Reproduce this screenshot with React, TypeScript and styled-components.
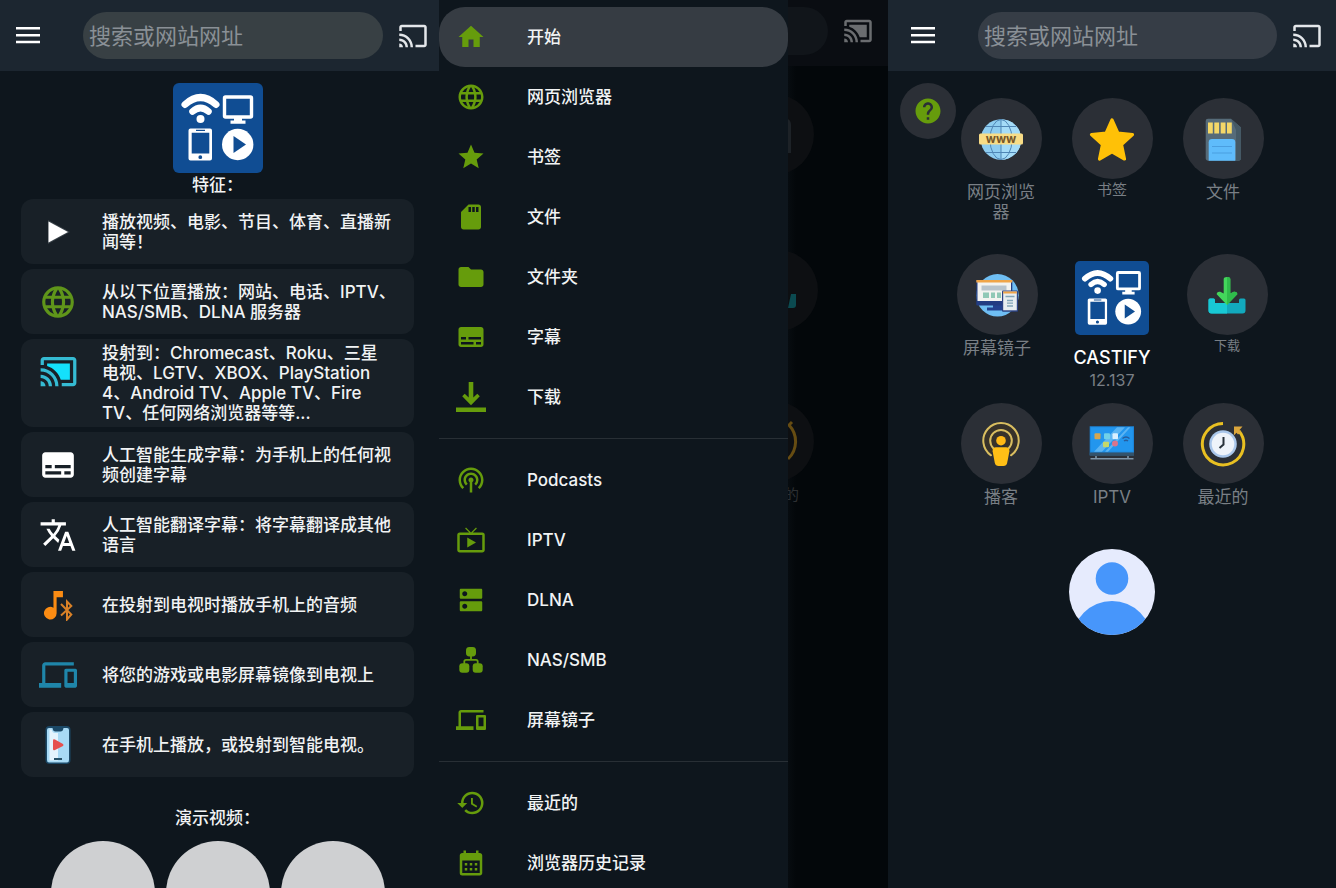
import React from "react";
import styled, { createGlobalStyle } from "styled-components";
import {
  MdCalendarMonth,
  MdCast,
  MdCastConnected,
  MdDevices,
  MdDns,
  MdFolder,
  MdHelp,
  MdHistory,
  MdHome,
  MdLanguage,
  MdLiveTv,
  MdPodcasts,
  MdSdStorage,
  MdStar,
  MdSubtitles,
  MdTranslate,
} from "react-icons/md";

const color = {
  page: "#0e161d",
  bar: "#1c2630",
  card: "#182027",
  disc: "#2b2f36",
  text: "#f1f3f4",
  muted: "#797f85",
  green: "#669c0c",
};

const GlobalStyle = createGlobalStyle`
  *, *::before, *::after { box-sizing: border-box; }
  body {
    margin: 0;
    background: ${color.page};
    color: ${color.text};
    font-family: Inter, "Noto Sans CJK SC", sans-serif;
    font-size: 17px;
    line-height: 20px;
  }
  ul { margin: 0; padding: 0; list-style: none; }
  h2, p { margin: 0; }
  svg { display: block; flex: none; }
`;

/* ---------- shared ---------- */

const Page = styled.main`
  display: grid;
  grid-template-columns: 439fr 449fr 448fr;
  height: 100vh;
  overflow: hidden;
`;

const Screen = styled.section`
  position: relative;
  min-width: 0;
  background: ${color.page};
`;

const TopBar = styled.header<{ $inset: number; $end: number }>`
  display: flex;
  align-items: center;
  height: 71px;
  padding: 0 ${(p) => p.$end}px 0 ${(p) => p.$inset}px;
  background: ${color.bar};
`;

const IconButton = styled.button`
  display: flex;
  padding: 0;
  border: 0;
  background: none;
  color: #e4e7ea;
`;

const SearchBox = styled.input<{ $fill: string }>`
  flex: 1;
  min-width: 0;
  height: 47px;
  margin: 0 15px 0 43px;
  padding: 0 6px;
  border: 0;
  border-radius: 24px;
  background: ${(p) => p.$fill};
  color: ${color.text};
  font: 22px/28px Inter, "Noto Sans CJK SC", sans-serif;
  &::placeholder { color: #8a9096; opacity: 1; }
`;

const MenuGlyph = () => (
  <svg width="24" height="18" viewBox="0 0 24 18" stroke="#fff" strokeWidth="2.6">
    <path d="M0 1.300h24M0 8.200h24M0 15h24" />
  </svg>
);

function SearchBar({ inset, end, fill, id }: { inset: number; end: number; fill: string; id: string }) {
  return (
    <TopBar $inset={inset} $end={end}>
      <IconButton aria-label="菜单"><MenuGlyph /></IconButton>
      <SearchBox id={id} $fill={fill} type="text" placeholder="搜索或网站网址" aria-label="搜索或网站网址" />
      <IconButton aria-label="投射"><MdCast size={30} /></IconButton>
    </TopBar>
  );
}

const CastifyLogo = ({ size }: { size: number }) => (
  <svg width={size} height={size} viewBox="0 0 90 90" role="img" aria-label="Castify">
    <rect width="90" height="90" rx="6" fill="#104d93" />
    <g fill="none" stroke="#fff" strokeLinecap="round">
      <path d="M12 21.5Q27.5 7.500 43 21.500" strokeWidth="7" />
      <path d="M19.500 28.500Q27.500 21.500 35.500 28.500" strokeWidth="6.500" />
    </g>
    <circle cx="27.500" cy="36" r="4" fill="#fff" />
    <rect x="51.500" y="14" width="27" height="20" rx="1" fill="none" stroke="#fff" strokeWidth="3.400" />
    <path d="M61 35h8v2.500h3.500v3.200h-15v-3.200H61z" fill="#fff" />
    <path d="M17.500 45.500h19.500a2 2 0 012 2v28a2 2 0 01-2 2H17.500a2 2 0 01-2-2v-28a2 2 0 012-2zm1.200 4.200V70.500h17.600V49.700zM23 46.800v1.200h9v-1.200zM27.300 72.300a1.900 1.900 0 100 3.800 1.900 1.900 0 000-3.800z" fill="#fff" fillRule="evenodd" />
    <circle cx="64.700" cy="61.500" r="15.700" fill="#fff" />
    <path d="M60.500 53v17l12.500-8.500z" fill="#104d93" />
  </svg>
);

/* ---------- feature list ---------- */

const Intro = styled.div`
  display: flex;
  flex-direction: column;
  align-items: center;
  padding: 12px 25px 0 21px;
`;

const Heading = styled.h2`
  padding: 2px 0 4px;
  font-size: 17px;
  line-height: 20px;
  font-weight: 500;
`;

const FeatureList = styled.ul`
  display: flex;
  flex-direction: column;
  gap: 5px;
  width: 100%;
  margin-bottom: 29px;
`;

const Feature = styled.li`
  display: flex;
  min-height: 65px;
  padding: 0 13px 0 17px;
  border-radius: 12px;
  background: ${color.card};
`;

const FeatureIcon = styled.span<{ $tint: string }>`
  display: flex;
  align-items: center;
  justify-content: center;
  width: 40px;
  height: 65px;
  margin-right: 24px;
  color: ${(p) => p.$tint};
`;

const FeatureText = styled.p`
  flex: 1;
  align-self: center;
  padding: 4px 0;
  font-weight: 500;
  white-space: pre-line;
`;

const Demos = styled.div`
  display: flex;
  gap: 11px;
  margin-top: 9px;
`;

const DemoButton = styled.button`
  width: 104px;
  height: 104px;
  border: 0;
  border-radius: 50%;
  background: #cfd0d2;
`;

const PlayGlyph = () => (
  <svg width="30" height="30" viewBox="0 0 30 30">
    <path d="M5 3v24l22-12z" fill="#58626a" opacity=".5" />
    <path d="M5.500 4.500v21L25 15z" fill="#fff" />
  </svg>
);

const CastOnGlyph = () => (
  <svg width="39" height="39" viewBox="0 0 24 24">
    <path d="M19 7H5v1.630c3.960 1.280 7.090 4.410 8.370 8.370H19z" fill="#14e0fb" />
    <path d="M1 18v3h3c0-1.660-1.340-3-3-3zm0-4v2c2.760 0 5 2.240 5 5h2c0-3.870-3.130-7-7-7zm0-4v2a9 9 0 019 9h2c0-6.080-4.930-11-11-11zM21 3H3c-1.100 0-2 .9-2 2v3h2V5h18v14h-7v2h7c1.100 0 2-.9 2-2V5c0-1.100-.9-2-2-2z" fill="#35bbd3" />
  </svg>
);

const BluetoothAudioGlyph = () => (
  <svg width="32" height="32" viewBox="0 0 32 32">
    <path d="M12 3v10.550A4 4 0 1014 17V7h4V3z" transform="translate(-7.500 -2.700) scale(1.580)" fill="#fb8c13" />
    <path d="M19 15l10.300 10.500-4.300 5V12.500l4.300 4.500L19 26.500" fill="none" stroke="#d98127" strokeWidth="2" />
  </svg>
);

const PhonePlayGlyph = () => (
  <svg width="28" height="40" viewBox="0 0 28 40">
    <rect x="1.500" y="1" width="25" height="38" rx="4" fill="#1b4866" />
    <path d="M5 3h3.500q.5 3.500 3 3.500h5q2.500 0 3-3.500H23q2 0 2 2v30q0 2.500-2 2.500H5q-2 0-2-2.500V5q0-2 2-2z" fill="#a8daf5" />
    <path d="M5.500 4.500h2q1 3.500 3.500 3.500h3v27.500H5.500z" fill="#e4f4fd" />
    <path d="M9 15.500q0-2 2-1l8 4.500q1 1 0 2l-8 4q-2 1-2-1z" fill="#e5504e" />
    <path d="M10 34h8" stroke="#285268" strokeWidth="2" />
  </svg>
);

const features: { text: string; tint: string; icon: React.ReactNode }[] = [
  { text: "播放视频、电影、节目、体育、直播新\n闻等！", tint: "#fff", icon: <PlayGlyph /> },
  { text: "从以下位置播放：网站、电话、IPTV、\nNAS/SMB、DLNA 服务器", tint: "#5f951a", icon: <MdLanguage size={38} /> },
  {
    text: "投射到：Chromecast、Roku、三星\n电视、LGTV、XBOX、PlayStation\n4、Android TV、Apple TV、Fire\nTV、任何网络浏览器等等...",
    tint: "#35bbd3",
    icon: <CastOnGlyph />,
  },
  { text: "人工智能生成字幕：为手机上的任何视\n频创建字幕", tint: "#fff", icon: <MdSubtitles size={38} /> },
  { text: "人工智能翻译字幕：将字幕翻译成其他\n语言", tint: "#fff", icon: <MdTranslate size={38} /> },
  { text: "在投射到电视时播放手机上的音频", tint: "#fb8c13", icon: <BluetoothAudioGlyph /> },
  { text: "将您的游戏或电影屏幕镜像到电视上", tint: "#1f86aa", icon: <MdDevices size={38} /> },
  { text: "在手机上播放，或投射到智能电视。", tint: "#fff", icon: <PhonePlayGlyph /> },
];

function FeatureScreen() {
  return (
    <Screen>
      <SearchBar id="search-features" inset={16} end={11} fill="#384044" />
      <Intro>
        <CastifyLogo size={90} />
        <Heading>特征：</Heading>
        <FeatureList>
          {features.map((f) => (
            <Feature key={f.text}>
              <FeatureIcon $tint={f.tint}>{f.icon}</FeatureIcon>
              <FeatureText>{f.text}</FeatureText>
            </Feature>
          ))}
        </FeatureList>
        <Heading>演示视频：</Heading>
        <Demos>
          {[1, 2, 3].map((n) => (
            <DemoButton key={n} aria-label={`演示 ${n}`} />
          ))}
        </Demos>
      </Intro>
    </Screen>
  );
}

/* ---------- drawer ---------- */

const DrawerScreen = styled(Screen)`
  display: grid;
  grid-template-columns: 349fr 100fr;
`;

const Drawer = styled.nav`
  padding-top: 7px;
  background: ${color.page};
`;

const DrawerGroup = styled.ul`
  & + & {
    margin-top: 11px;
    padding-top: 11px;
    border-top: 1px solid #282f35;
  }
`;

const DrawerLink = styled.a<{ $active?: boolean }>`
  display: flex;
  align-items: center;
  gap: 41px;
  height: 60px;
  padding-left: 17px;
  border-radius: 26px;
  background: ${(p) => (p.$active ? "#363c43" : "transparent")};
  color: ${color.text};
  font-weight: 500;
  text-decoration: none;
  svg { color: ${color.green}; }
`;

const DownloadGlyph = () => (
  <svg width="30" height="30" viewBox="0 0 30 30" fill="currentColor">
    <path d="M12.700 0h4.600v15.500l4-3.800 2.500 2.600L15 23.300l-8.800-9 2.500-2.600 4 3.800zM0 25.600h30V30H0z" />
  </svg>
);

const NetworkGlyph = () => (
  <svg width="30" height="30" viewBox="0 0 30 30" fill="currentColor">
    <rect x="10" y="2" width="10" height="9.500" rx="3.400" />
    <rect x="3.300" y="18.300" width="10" height="9.500" rx="3" />
    <rect x="16.700" y="18.300" width="10" height="9.500" rx="3" />
    <path d="M15 11v4M8.300 19v-2.500q0-1.700 1.700-1.700h10q1.700 0 1.700 1.700V19" fill="none" stroke="currentColor" strokeWidth="1.800" />
  </svg>
);

type MenuEntry = { label: string; icon: React.ReactNode; active?: boolean };

const menu: MenuEntry[][] = [
  [
    { label: "开始", icon: <MdHome size={30} />, active: true },
    { label: "网页浏览器", icon: <MdLanguage size={30} /> },
    { label: "书签", icon: <MdStar size={30} /> },
    { label: "文件", icon: <MdSdStorage size={30} /> },
    { label: "文件夹", icon: <MdFolder size={30} /> },
    { label: "字幕", icon: <MdSubtitles size={30} /> },
    { label: "下载", icon: <DownloadGlyph /> },
  ],
  [
    { label: "Podcasts", icon: <MdPodcasts size={30} /> },
    { label: "IPTV", icon: <MdLiveTv size={30} /> },
    { label: "DLNA", icon: <MdDns size={30} /> },
    { label: "NAS/SMB", icon: <NetworkGlyph /> },
    { label: "屏幕镜子", icon: <MdDevices size={30} /> },
  ],
  [
    { label: "最近的", icon: <MdHistory size={30} /> },
    { label: "浏览器历史记录", icon: <MdCalendarMonth size={30} /> },
  ],
];

/* The dimmed home screen showing beside the open drawer. */

const Backdrop = styled.div`
  overflow: hidden;
  background: linear-gradient(to right, #070c10, #03070a 8px);
`;

const BackdropBar = styled.div`
  display: flex;
  align-items: center;
  justify-content: space-between;
  height: 66px;
  padding: 0 15px 4px 0;
  background: #0a0d12;
  color: #6b6d70;
`;

const BackdropField = styled.div`
  width: 40px;
  height: 48px;
  border-radius: 0 24px 24px 0;
  background: #11151a;
`;

const BackdropTile = styled.div<{ $gap: number; $shift: number }>`
  width: 81px;
  height: 81px;
  margin: ${(p) => p.$gap}px 0 0 ${(p) => p.$shift}px;
  border-radius: 50%;
  background: #0d0f12;
`;

const BackdropLabel = styled.p`
  margin-top: 3px;
  font-size: 15px;
  margin-left: -4px;
  color: #2c2f32;
`;

function MenuScreen() {
  return (
    <DrawerScreen>
      <Drawer aria-label="主菜单">
        {menu.map((group, i) => (
          <DrawerGroup key={i}>
            {group.map((m) => (
              <li key={m.label}>
                <DrawerLink href="#" $active={m.active}>
                  {m.icon}
                  {m.label}
                </DrawerLink>
              </li>
            ))}
          </DrawerGroup>
        ))}
      </Drawer>
      <Backdrop>
        <BackdropBar>
          <BackdropField />
          <MdCastConnected size={30} />
        </BackdropBar>
        <BackdropTile $gap={28} $shift={-55}>
          <svg width="81" height="81" viewBox="0 0 81 81"><path d="M53 24q5 2 5 7v28h-5z" fill="#1d2227" /></svg>
        </BackdropTile>
        <BackdropTile $gap={75} $shift={-51}>
          <svg width="81" height="81" viewBox="0 0 81 81"><path d="M54 44h5v11q0 3-3 3h-5z" fill="#0b4a50" /></svg>
        </BackdropTile>
        <BackdropTile $gap={70} $shift={-55}>
          <svg width="81" height="81" viewBox="0 0 81 81"><path d="M59 21l-3 3a24 24 0 01-1 34" fill="none" stroke="#664c12" strokeWidth="3" /></svg>
        </BackdropTile>
        <BackdropLabel>的</BackdropLabel>
      </Backdrop>
    </DrawerScreen>
  );
}

/* ---------- home ---------- */

const HelpButton = styled.button`
  position: absolute;
  top: 83px;
  left: 12px;
  display: flex;
  align-items: center;
  justify-content: center;
  width: 56px;
  height: 56px;
  padding: 0;
  border: 0;
  border-radius: 50%;
  background: ${color.disc};
  color: ${color.green};
`;

const Tiles = styled.div`
  display: flex;
  flex-direction: column;
  align-items: center;
  padding-top: 27px;
`;

const TileRow = styled.ul<{ $gap: number; $after: number }>`
  display: flex;
  gap: ${(p) => p.$gap}px;
  margin-bottom: ${(p) => p.$after}px;
`;

const TileLink = styled.a`
  display: flex;
  flex-direction: column;
  align-items: center;
  gap: 3px;
  width: 81px;
  color: ${color.muted};
  text-align: center;
  text-decoration: none;
`;

const Disc = styled.span`
  display: flex;
  align-items: center;
  justify-content: center;
  width: 81px;
  height: 81px;
  border-radius: 50%;
  background: ${color.disc};
`;

const TileLabel = styled.span<{ $size: number }>`
  padding: 0 5px;
  font-size: ${(p) => p.$size}px;
  line-height: ${(p) => (p.$size < 17 ? p.$size + 1 : 20)}px;
`;

const Brand = styled.li`
  display: flex;
  flex-direction: column;
  align-items: center;
  width: 81px;
  padding-top: 7px;
`;

const BrandName = styled.p`
  margin: 13px 0 2px;
  color: #fff;
  font-size: 18px;
  font-weight: 500;
`;

const Version = styled.p`
  color: ${color.muted};
  font-size: 16px;
`;

const AvatarButton = styled.button`
  padding: 0;
  border: 0;
  border-radius: 50%;
  background: none;
`;

const BandText = styled.text`
  font: 700 12px Inter, sans-serif;
  fill: #75572a;
  text-anchor: middle;
`;

const Art = ({ children }: { children: React.ReactNode }) => (
  <svg width="46" height="46" viewBox="0 0 46 46">{children}</svg>
);

const WebArt = () => (
  <Art>
    <circle cx="23" cy="23.500" r="20.300" fill="#8fcdf0" />
    <path d="M23 3.200a20.300 20.300 0 010 40.600z" fill="#a5dcf8" />
    <g fill="none" stroke="#4f86b5" strokeWidth="1">
      <ellipse cx="23" cy="23.500" rx="11" ry="20" />
      <path d="M23 3v41M8 10.500h30M8 36.500h30" />
    </g>
    <rect x="1" y="17.500" width="44" height="11" rx="1.500" fill="#f8dc86" />
    <BandText x="23" y="26.500">www</BandText>
  </Art>
);

const StarArt = () => (
  <Art>
    <path d="M23 4l5.800 13L43.500 18.500 32.500 28.500 35.500 43 23 35.800 10.500 43 13.500 28.500 2.500 18.500 17.200 17z" fill="#ffc107" stroke="#ffc107" strokeWidth="3.200" strokeLinejoin="round" />
  </Art>
);

const SdArt = () => (
  <Art>
    <path d="M8 2.700h23L41 11.500V42q0 2.700-2.700 2.700H8.400q-2.700 0-2.700-2.700V5q0-2.300 2.300-2.300z" fill="#566b79" />
    <path d="M31 2.700l10 8.800V42q0 2.700-2.700 2.700H36V14z" fill="#455965" />
    <path d="M8 6.500h4.800v11H8zM14.300 6.500h4.800v11h-4.800zM20.700 6.500h4.800v11h-4.800zM27 6.500h4.800v11H27z" fill="#f3d768" />
    <path d="M12 23h20q3.300 0 3.300 3.300v18.400H8.700V26.300Q8.700 23 12 23z" fill="#5fbcfb" />
    <path d="M12 30.500h20M12 37h20" stroke="#4a9fe0" strokeWidth="1" />
  </Art>
);

const MirrorArt = () => (
  <Art>
    <circle cx="23.500" cy="23.300" r="21.200" fill="#6fbef3" />
    <path d="M13 38.500v-3h6V32h10v3.500h4v3z" fill="#23428f" />
    <rect x="2.300" y="8" width="36" height="25.500" rx="1" fill="#223c82" />
    <rect x="3.500" y="9" width="33.500" height="20" fill="#f3f3f0" />
    <path d="M2.300 8h36v2.600h-36z" fill="#f0a548" />
    <path d="M7.500 13.500h25v5h-25z" fill="#b8c4cc" />
    <path d="M9 20.500h6v5.500H9zM17 20.500h4v5.500h-4zM23 20.500h4v5.500h-4z" fill="#90c8b6" />
    <rect x="28" y="18.500" width="16" height="21.200" rx="1" fill="#2c4383" />
    <rect x="29.200" y="19.500" width="13.600" height="18.800" fill="#e8eef0" />
    <path d="M29.200 19.500h13.600v2H29.200z" fill="#f0a548" />
    <path d="M31.500 24.500h9M33 28.500h6M33 31.200h6M33 34h6" stroke="#82a6b8" strokeWidth="1.300" />
  </Art>
);

const DownloadArt = () => (
  <Art>
    <path d="M4.500 28q0-1.500 1.500-1.500h3.500q1.500 0 1.500 1.500v3h24v-3q0-1.500 1.500-1.500H40q1.500 0 1.500 1.500v10.500q0 3-3 3h-31q-3 0-3-3z" fill="#12a9bd" />
    <path d="M4.500 28q0-1.500 1.500-1.500h3.500q1.500 0 1.500 1.500v3h12v10.500H7.500q-3 0-3-3z" fill="#18c9d4" />
    <path d="M19.700 7q0-2 3.300-2t3.300 2v14.500l3.500-1.800q3.500-.5 3.500 2.500L23 33 12.700 22.200q0-3 3.500-2.500l3.500 1.800z" fill="#43d65b" />
    <path d="M23 5q3.300 0 3.300 2v14.500l3.500-1.800q3.500-.5 3.500 2.500L23 33z" fill="#2fbb4b" />
  </Art>
);

const PodcastArt = () => (
  <Art>
    <circle cx="23" cy="19.700" r="17" fill="#37322a" />
    <path d="M12 34l11-14 11 14v8H12z" fill={color.disc} />
    <g fill="none" stroke="#d9be60" strokeWidth="2" strokeLinecap="round">
      <path d="M13 34.300A17.700 17.700 0 1133 34.300" />
      <path d="M15.500 27.500a10.800 10.800 0 1115 0" />
    </g>
    <circle cx="23" cy="19.700" r="4.800" fill="#ffb915" />
    <path d="M18 26.200h10q3.600 0 3.400 4l-2.200 11.500q-.7 3.300-3.800 3.300h-4.800q-3.100 0-3.800-3.300l-2.200-11.500q-.2-4 3.400-4z" fill="#ffbf16" />
  </Art>
);

const TvArt = () => (
  <Art>
    <path d="M.7 5.300H45v29H.7z" fill="#1c84d8" />
    <path d="M1.800 6.300h42.100v24.500H1.800z" fill="#2296ee" />
    <path d="M28 6.300h8L13 30.800H5zM39 6.300h2.500L19 30.800h-3z" fill="#6fbdf4" opacity=".75" />
    <path d="M.7 31.500H45v3.200H.7z" fill="#34536b" />
    <path d="M1.500 37.800h43M7 35v3M39 35v3" stroke="#8096a8" strokeWidth="1.600" />
    <rect x="5.500" y="12.300" width="6" height="6" rx="1" fill="#d5a650" />
    <rect x="15" y="12.300" width="6" height="6" rx="1" fill="#6fd0e8" />
    <rect x="23.500" y="12.300" width="5.500" height="6" rx="1" fill="#d9efff" />
    <rect x="14" y="20.800" width="6" height="5.500" rx="1" fill="#c4d86a" />
    <circle cx="26" cy="22.500" r="3" fill="#d9748c" />
    <path d="M33.500 17.500q3.500-3 7 0M35 20q2-1.700 4 0" fill="none" stroke="#285d9c" strokeWidth="1.400" />
  </Art>
);

const RecentArt = () => (
  <Art>
    <path d="M23 2.500A20.700 20.700 0 1039 10" fill="none" stroke="#e9c022" strokeWidth="3" />
    <path d="M34 5.500h8.500L39.500 9l1.500 2-3 2.500-1.500-1.700-2.500 2.400z" fill="#dba63c" />
    <circle cx="23" cy="23" r="13.800" fill="#a9c6ea" />
    <circle cx="23" cy="23" r="11.300" fill="#eef3fa" />
    <path d="M23.500 16v7.500L19.500 27" fill="none" stroke="#28313a" strokeWidth="2" />
  </Art>
);

type Tile = { label: string; art: React.ReactNode; size?: number };

const topTiles: Tile[] = [
  { label: "网页浏览器", art: <WebArt /> },
  { label: "书签", art: <StarArt />, size: 15 },
  { label: "文件", art: <SdArt /> },
];
const bottomTiles: Tile[] = [
  { label: "播客", art: <PodcastArt /> },
  { label: "IPTV", art: <TvArt /> },
  { label: "最近的", art: <RecentArt /> },
];

const TileItem = ({ label, art, size = 17 }: Tile) => (
  <li>
    <TileLink href="#">
      <Disc>{art}</Disc>
      <TileLabel $size={size}>{label}</TileLabel>
    </TileLink>
  </li>
);

function HomeScreen() {
  return (
    <Screen>
      <SearchBar id="search-home" inset={23} end={14} fill="#363d46" />
      <HelpButton aria-label="帮助"><MdHelp size={30} /></HelpButton>
      <Tiles>
        <TileRow $gap={30} $after={32}>
          {topTiles.map((t) => <TileItem key={t.label} {...t} />)}
        </TileRow>
        <TileRow $gap={34} $after={13}>
          <TileItem label="屏幕镜子" art={<MirrorArt />} />
          <Brand>
            <CastifyLogo size={74} />
            <BrandName>CASTIFY</BrandName>
            <Version>12.137</Version>
          </Brand>
          <TileItem label="下载" art={<DownloadArt />} size={13} />
        </TileRow>
        <TileRow $gap={30} $after={42}>
          {bottomTiles.map((t) => <TileItem key={t.label} {...t} />)}
        </TileRow>
        <AvatarButton aria-label="账户">
          <svg width="86" height="86" viewBox="0 0 86 86">
            <clipPath id="avatar-clip"><circle cx="43" cy="43" r="43" /></clipPath>
            <circle cx="43" cy="43" r="43" fill="#e6ebfd" />
            <circle cx="43" cy="29.500" r="16.300" fill="#4796fb" />
            <circle cx="43" cy="92" r="40" fill="#4796fb" clipPath="url(#avatar-clip)" />
          </svg>
        </AvatarButton>
      </Tiles>
    </Screen>
  );
}

export default function App() {
  return (
    <>
      <GlobalStyle />
      <Page>
        <FeatureScreen />
        <MenuScreen />
        <HomeScreen />
      </Page>
    </>
  );
}
